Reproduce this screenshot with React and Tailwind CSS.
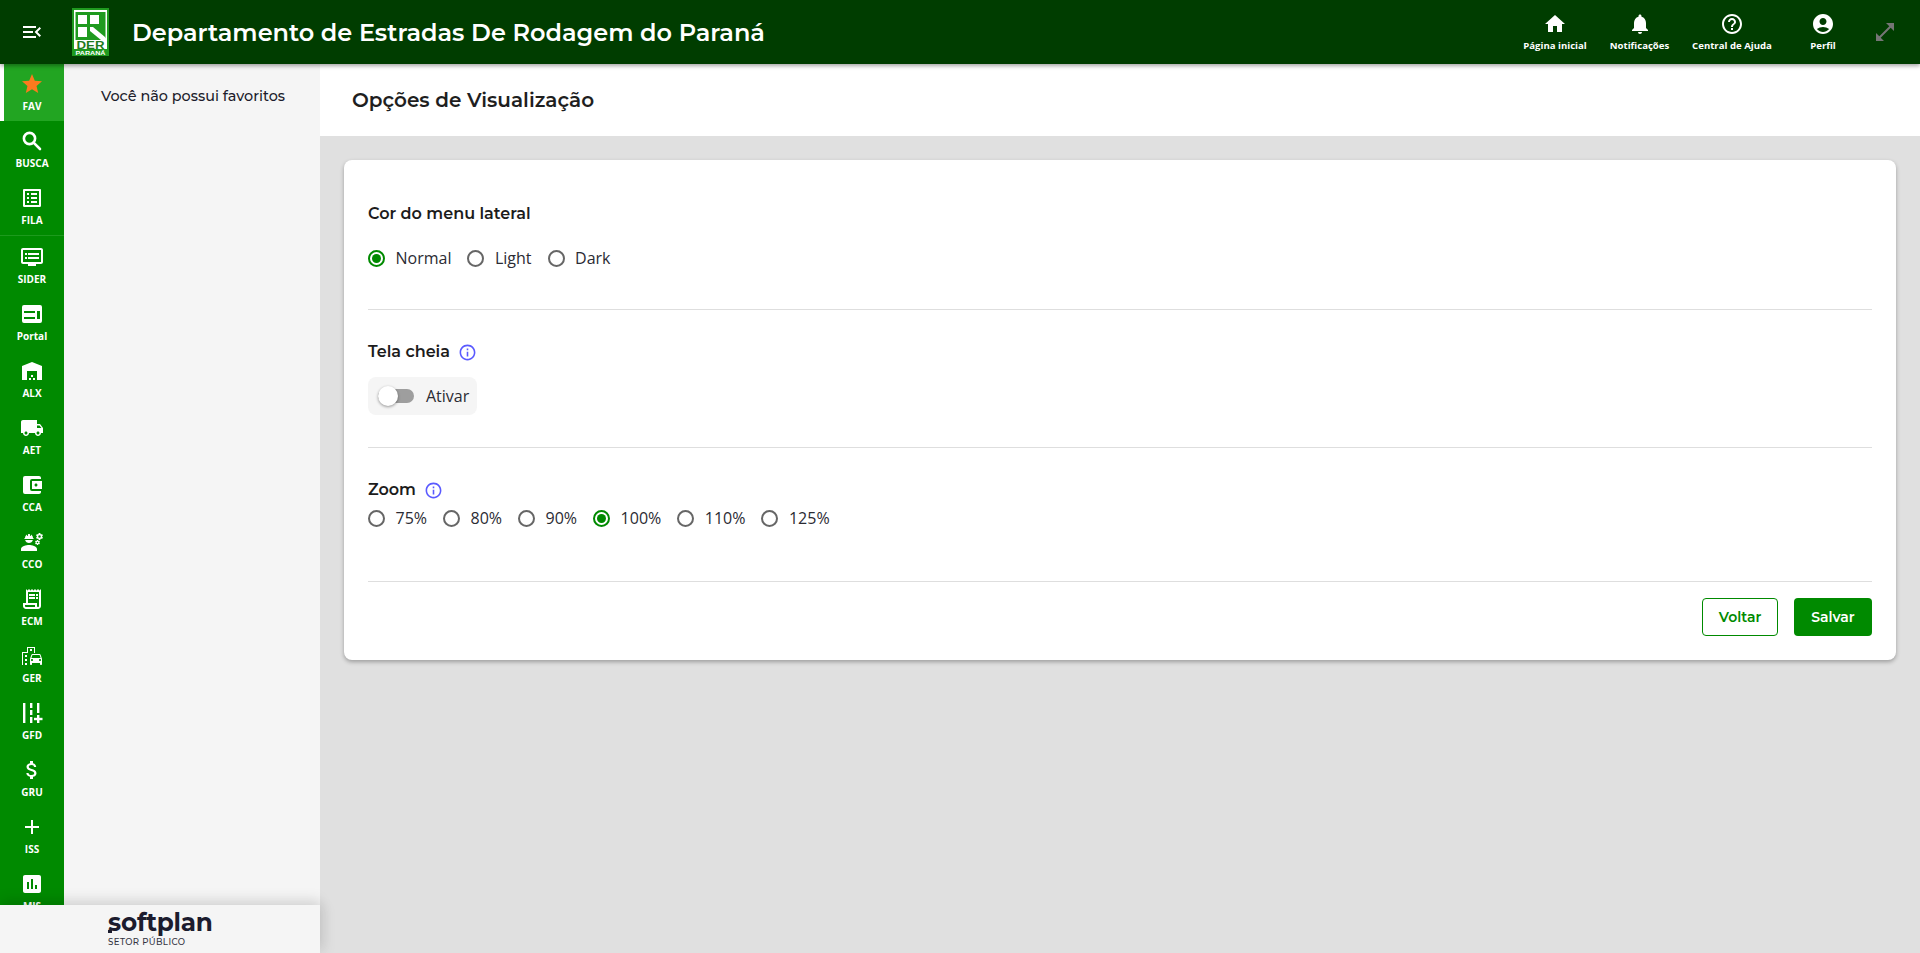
import React from "react";
import {
  MdMenuOpen, MdStar, MdOutlineListAlt, MdDvr, MdWarehouse, MdLocalShipping,
  MdAccountBalanceWallet, MdEngineering, MdOutlineReceiptLong, MdOutlineEmojiTransportation, MdAttachMoney, MdAdd,
  MdAssessment, MdHome, MdNotifications, MdHelpOutline, MdAccountCircle, MdOpenInFull, MdInfoOutline,
} from "react-icons/md";

const GfdIcon = ({ size, className }) => (
  <svg viewBox="0 0 24 24" width={size} height={size} fill="currentColor" className={className}>
    <rect x="3" y="2" width="2.4" height="20" />
    <rect x="10" y="2" width="2.4" height="5" />
    <rect x="10" y="9" width="2.4" height="5" />
    <rect x="10" y="16" width="2.4" height="6" />
    <rect x="17" y="2" width="2.4" height="10" />
    <rect x="17" y="14" width="2.4" height="8" />
    <rect x="14" y="16.8" width="8.5" height="2.4" />
  </svg>
);

const PortalIcon = ({ size, className }) => (
  <svg viewBox="0 0 24 24" width={size} height={size} fill="currentColor" className={className}>
    <path fillRule="evenodd" d="M4 3h16a2 2 0 0 1 2 2v14a2 2 0 0 1-2 2H4a2 2 0 0 1-2-2V5a2 2 0 0 1 2-2Zm0 6v2h11V9H4Zm0 6v2h11v-2H4Zm13-6v8h3V9h-3Z" />
  </svg>
);

const BoldSearch = ({ size, className }) => (
  <svg viewBox="0 0 24 24" width={size} height={size} fill="none" stroke="currentColor" strokeWidth="2.6" className={className}>
    <circle cx="9.5" cy="9.5" r="5.6" />
    <path d="M13.6 13.6 L20 20" strokeLinecap="round" />
  </svg>
);

const items = [
  ["FAV", MdStar, true],
  ["BUSCA", BoldSearch],
  ["FILA", MdOutlineListAlt],
  ["SIDER", MdDvr],
  ["Portal", PortalIcon],
  ["ALX", MdWarehouse],
  ["AET", MdLocalShipping],
  ["CCA", MdAccountBalanceWallet],
  ["CCO", MdEngineering],
  ["ECM", MdOutlineReceiptLong],
  ["GER", MdOutlineEmojiTransportation],
  ["GFD", GfdIcon],
  ["GRU", MdAttachMoney],
  ["ISS", MdAdd],
  ["MIS", MdAssessment],
];

const top = [
  ["Página inicial", MdHome, "w-[84px]"],
  ["Notificações", MdNotifications, "w-[85px]"],
  ["Central de Ajuda", MdHelpOutline, "w-[100px]"],
  ["Perfil", MdAccountCircle, "w-[82px]"],
];

const H = "font-['Montserrat','Inter','Liberation_Sans',sans-serif]";

function Radio({ label, on }) {
  return (
    <label className="flex items-center gap-[10.5px]">
      <span className={`flex h-[17px] w-[17px] items-center justify-center rounded-full border-2 ${on ? "border-[#008a00]" : "border-[#666666]"}`}>
        {on && <span className="h-[9px] w-[9px] rounded-full bg-[#008a00]" />}
      </span>
      <span className="text-base leading-6 text-[#2b2b33]">{label}</span>
    </label>
  );
}

function Logo() {
  return (
    <svg width="37" height="48" viewBox="0 0 37 48" className="shrink-0">
      <rect width="37" height="48" fill="#1f9a1f" />
      <rect x="2" y="2" width="33" height="39" fill="#fff" />
      <rect x="3.5" y="4" width="30" height="28" fill="#1f9a1f" />
      <rect x="6" y="7" width="9" height="9" fill="#fff" />
      <rect x="18" y="7" width="9" height="9" fill="#fff" />
      <rect x="6" y="19" width="9" height="10" fill="#fff" />
      <path d="M18 19 L21 19 L33 29 L35 32 L29 32 L18 23 Z" fill="#fff" />
      <text x="18.5" y="40.5" textAnchor="middle" fontSize="10" fontWeight="800" textLength="28" lengthAdjust="spacingAndGlyphs" fill="#1f7a1f" fontFamily="Liberation Sans, sans-serif">DER</text>
      <text x="18.5" y="47" textAnchor="middle" fontSize="5" fontWeight="700" textLength="30" lengthAdjust="spacingAndGlyphs" fill="#fff" fontFamily="Liberation Sans, sans-serif">PARANÁ</text>
    </svg>
  );
}

export default function App() {
  return (
    <div className="flex h-[953px] w-[1920px] flex-col overflow-hidden bg-[#e0e0e0] font-['Open_Sans',sans-serif]">
      <header className="relative z-20 flex h-16 shrink-0 items-center bg-[#003d00] shadow-[0_2px_4px_rgba(0,0,0,0.35)]">
        <div className="flex w-[64px] justify-center text-white">
          <MdMenuOpen size={24} />
        </div>
        <div className="ml-[8px] flex items-center">
          <Logo />
        </div>
        <h1 className={`${H} ml-[23px] mt-[1px] text-2xl font-semibold text-white`}>Departamento de Estradas De Rodagem do Paraná</h1>
        <div className="ml-auto flex items-center pr-[15px]">
          {top.map(([t, I, w]) => (
            <div key={t} className={`flex flex-col items-center text-white ${w}`}>
              <I size={24} />
              <span className="mt-[3px] text-[9.6px] font-bold leading-[14px]">{t}</span>
            </div>
          ))}
          <div className="flex w-[41px] justify-center text-[#757575]">
            <MdOpenInFull size={24} />
          </div>
        </div>
      </header>

      <div className="flex min-h-0 flex-1">
        <div className="relative z-10 flex w-[320px] shrink-0 flex-col">
          <div className="flex min-h-0 flex-1">
            <nav className="w-16 shrink-0 overflow-hidden bg-[#008a00]">
              {items.map(([t, I, active]) => (
                <div key={t}>
                  <div
                    className={`flex h-[57px] flex-col items-center pt-[8px] ${active ? "bg-[#22a522] shadow-[inset_4px_0_0_#ffffff]" : ""}`}
                  >
                    <I size={24} className={active ? "text-[#fb7a1e]" : "text-white"} />
                    <span className="mt-[3px] text-[10px] font-bold leading-[14px] text-white">{t}</span>
                  </div>
                  {t === "FILA" && <div className="h-[2px] border-t border-[#1d9a1d]" />}
                </div>
              ))}
            </nav>
            <aside className="flex-1 bg-[#f5f5f5]">
              <p className={`${H} mt-[22px] pl-[2px] text-center text-[14.4px] font-medium leading-5 text-[#1c1c2b]`}>Você não possui favoritos</p>
            </aside>
          </div>
          <footer className="flex h-[48px] shrink-0 flex-col bg-[#f5f5f5] pl-[108px] pt-[5px] shadow-[0_-6px_12px_rgba(0,0,0,0.1),6px_0_12px_rgba(0,0,0,0.06)]">
            <span className={`${H} relative text-[24.7px] font-bold leading-[24px] tracking-[-0.2px] text-[#1c1c2e]`}>
              softplan
              <span className="absolute left-0 top-[20px] h-[3px] w-[4px] bg-[#1c1c2e]" />
            </span>
            <span className={`${H} mt-[3px] text-[8.6px] font-medium leading-[10px] tracking-[0.4px] text-[#33333f]`}>SETOR PÚBLICO</span>
          </footer>
        </div>

        <main className="flex min-w-0 flex-1 flex-col">
          <div className="flex h-[72px] items-center bg-white pl-[32px]">
            <h2 className={`${H} text-xl font-semibold text-[#1f1f1f]`}>Opções de Visualização</h2>
          </div>
          <div className="px-6 pt-6">
            <section className="h-[500px] rounded-lg bg-white px-6 pt-[43px] shadow-[0_2px_4px_rgba(0,0,0,0.3)]">
              <h3 className={`${H} text-base font-semibold leading-[22px] text-[#1c1c1c]`}>Cor do menu lateral</h3>
              <div className="mt-[21px] flex h-6 gap-4">
                <Radio label="Normal" on />
                <Radio label="Light" />
                <Radio label="Dark" />
              </div>
              <hr className="mt-[39px] border-[#dedede]" />
              <div className="mt-[31px] flex h-[22px] items-center gap-[8px]">
                <h3 className={`${H} text-base font-semibold leading-[22px] text-[#1c1c1c]`}>Tela cheia</h3>
                <MdInfoOutline size={19} className="text-[#5a5aff]" />
              </div>
              <div className="mt-[14px] flex h-[38px] w-[109px] items-center rounded-lg bg-[#f5f5f5] pl-[10px]">
                <span className="relative block h-[14px] w-9 rounded-full bg-[#9e9e9e]">
                  <span className="absolute left-0 top-[-3px] h-5 w-5 rounded-full bg-white shadow-[0_1px_3px_rgba(0,0,0,0.4)]" />
                </span>
                <span className="ml-[12px] text-base leading-6 text-[#2b2b33]">Ativar</span>
              </div>
              <hr className="mt-[32px] border-[#dedede]" />
              <div className="mt-[31px] flex h-[22px] items-center gap-[8px]">
                <h3 className={`${H} text-base font-semibold leading-[22px] text-[#1c1c1c]`}>Zoom</h3>
                <MdInfoOutline size={19} className="text-[#5a5aff]" />
              </div>
              <div className="mt-[5px] flex h-6 gap-4">
                <Radio label="75%" />
                <Radio label="80%" />
                <Radio label="90%" />
                <Radio label="100%" on />
                <Radio label="110%" />
                <Radio label="125%" />
              </div>
              <hr className="mt-[51px] border-[#dedede]" />
              <div className="mt-4 flex justify-end gap-4">
                <button className={`${H} h-[38px] w-[76px] rounded border border-[#008a00] bg-white text-sm font-semibold text-[#008a00]`}>Voltar</button>
                <button className={`${H} h-[38px] w-[78px] rounded bg-[#008a00] text-sm font-semibold text-white`}>Salvar</button>
              </div>
            </section>
          </div>
        </main>
      </div>
    </div>
  );
}
